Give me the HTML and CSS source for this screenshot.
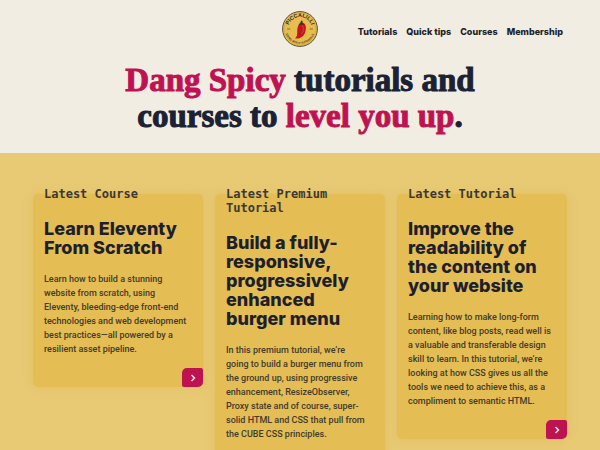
FILE: index.html
```html
<!DOCTYPE html>
<html lang="en">
<head>
<meta charset="utf-8">
<meta name="viewport" content="width=device-width, initial-scale=1">
<title>Piccalilli</title>
<link rel="stylesheet" href="styles.css">
</head>
<body>
<header class="site-head">
  <a class="logo" href="#" aria-label="Piccalilli home">
    <svg viewBox="0 0 120 120" aria-hidden="true">
      <defs>
        <path id="arc-top" d="M20 60a40 40 0 0 1 80 0"/>
        <path id="arc-bottom" d="M10 60a50 50 0 0 0 100 0"/>
      </defs>
      <circle cx="60" cy="60" r="58" fill="#e7bd4f" stroke="#4a4232" stroke-width="3"/>
      <circle cx="60" cy="60" r="53" fill="none" stroke="#b08c3a" stroke-width="1"/>
      <text class="logo-name" text-anchor="middle"><textPath href="#arc-top" startOffset="50%">PICCALILLI</textPath></text>
      <text class="logo-tag" text-anchor="middle"><textPath href="#arc-bottom" startOffset="50%">DANG SPICY TUTORIALS</textPath></text>
      <path d="M17 60h11M92 60h11" stroke="#8a6d2d" stroke-width="4"/>
      <path d="M64 40C75 37 82 48 79 63 76 84 62 93 42 92c9-5 9-14 9-26 0-12 4-24 13-26z" fill="#c4161f"/>
      <path d="M68 48c6 8 5 20-3 28" fill="none" stroke="#d94a3a" stroke-width="3" stroke-linecap="round"/>
      <path d="M56 47c3-6 7-8 8-15l5 1c-1 5-1 8 5 14-8-4-11-2-18 0z" fill="#3a3124"/>
    </svg>
  </a>
  <nav class="nav" aria-label="Main">
    <a href="#">Tutorials</a>
    <a href="#">Quick tips</a>
    <a href="#">Courses</a>
    <a href="#">Membership</a>
  </nav>
</header>
<main>
  <section class="hero">
    <h1><em>Dang Spicy</em> tutorials and<br>courses to <em>level you up</em>.</h1>
  </section>
  <section class="features">
    <article class="card">
      <p class="label">Latest Course</p>
      <h2>Learn Eleventy<br>From Scratch</h2>
      <p class="summary">Learn how to build a stunning<br>website from scratch, using<br>Eleventy, bleeding-edge front-end<br>technologies and web development<br>best practices—all powered by a<br>resilient asset pipeline.</p>
      <a class="more" href="#" aria-label="Learn Eleventy From Scratch"><svg viewBox="0 0 8 8" aria-hidden="true"><path d="M2.500 1 5.500 4 2.500 7"/></svg></a>
    </article>
    <article class="card">
      <p class="label">Latest Premium<br>Tutorial</p>
      <h2>Build a fully-<br>responsive,<br>progressively<br>enhanced<br>burger menu</h2>
      <p class="summary">In this premium tutorial, we’re<br>going to build a burger menu from<br>the ground up, using progressive<br>enhancement, ResizeObserver,<br>Proxy state and of course, super-<br>solid HTML and CSS that pull from<br>the CUBE CSS principles.</p>
      <a class="more" href="#" aria-label="Build a burger menu"><svg viewBox="0 0 8 8" aria-hidden="true"><path d="M2.500 1 5.500 4 2.500 7"/></svg></a>
    </article>
    <article class="card">
      <p class="label">Latest Tutorial</p>
      <h2>Improve the<br>readability of<br>the content on<br>your website</h2>
      <p class="summary">Learning how to make long-form<br>content, like blog posts, read well is<br>a valuable and transferable design<br>skill to learn. In this tutorial, we’re<br>looking at how CSS gives us all the<br>tools we need to achieve this, as a<br>compliment to semantic HTML.</p>
      <a class="more" href="#" aria-label="Improve the readability of your website"><svg viewBox="0 0 8 8" aria-hidden="true"><path d="M2.500 1 5.500 4 2.500 7"/></svg></a>
    </article>
  </section>
</main>
</body>
</html>
```
FILE: styles.css
```css
* {
  box-sizing: border-box;
}

html {
  scrollbar-width: none;
}

body {
  margin: 0;
  background: #f2ede3;
  color: #1d1f2b;
  font-family: Inter, sans-serif;
}

h1, h2, p {
  margin: 0;
}

.site-head {
  display: grid;
  grid-template-columns: 1fr 36px 1fr;
  align-items: center;
  padding: 11px 37px 0 36px;
}

.logo {
  grid-column: 2;
  display: block;
  height: 36px;
}

.logo svg {
  display: block;
  width: 36px;
  height: 36px;
}

.logo-name {
  fill: #2b2a28;
  font: 700 18px "Liberation Sans", sans-serif;
}

.logo-tag {
  fill: #4d401f;
  font: 700 10px "Liberation Sans", sans-serif;
}

.nav {
  display: flex;
  justify-content: flex-end;
  gap: 9px;
  padding-top: 5px;
  font-size: 9px;
  font-weight: 800;
  line-height: 14px;
}

.nav a {
  color: inherit;
  text-decoration: none;
  white-space: nowrap;
}

.hero {
  padding: 15px 32px 19px;
  text-align: center;
}

.hero h1 {
  color: #1a2233;
  font: 900 33px/36px "Liberation Serif", serif;
  -webkit-text-stroke: 1px currentColor;
}

.hero em {
  color: #be1251;
  font-style: normal;
}

.features {
  display: grid;
  grid-template-columns: repeat(3, 1fr);
  align-items: start;
  gap: 12px;
  padding: 41px 33px;
  background: #e8ca75;
}

.card {
  position: relative;
  padding: 0 4px 31px 11px;
  border-radius: 5px;
  background: #e4bd54;
  box-shadow: 0 0 10px rgb(222 180 72 / 50%);
}

.label {
  margin-top: -7px;
  color: #3b3837;
  font: 700 12px/14px "DejaVu Sans Mono", monospace;
}

.card h2 {
  margin-top: 18px;
  font-size: 18px;
  font-weight: 800;
  line-height: 19px;
  white-space: nowrap;
}

.summary {
  margin-top: 15px;
  color: #433a2c;
  font-family: Roboto, sans-serif;
  font-size: 9px;
  font-weight: 500;
  line-height: 14px;
  white-space: nowrap;
}

.more {
  position: absolute;
  right: 0;
  bottom: 0;
  display: grid;
  place-items: center;
  width: 21px;
  height: 19px;
  border-radius: 5px 2px;
  background: #be1251;
}

.more svg {
  width: 8px;
  height: 8px;
  fill: none;
  stroke: #f7e3dc;
  stroke-width: 1.500;
}
```
